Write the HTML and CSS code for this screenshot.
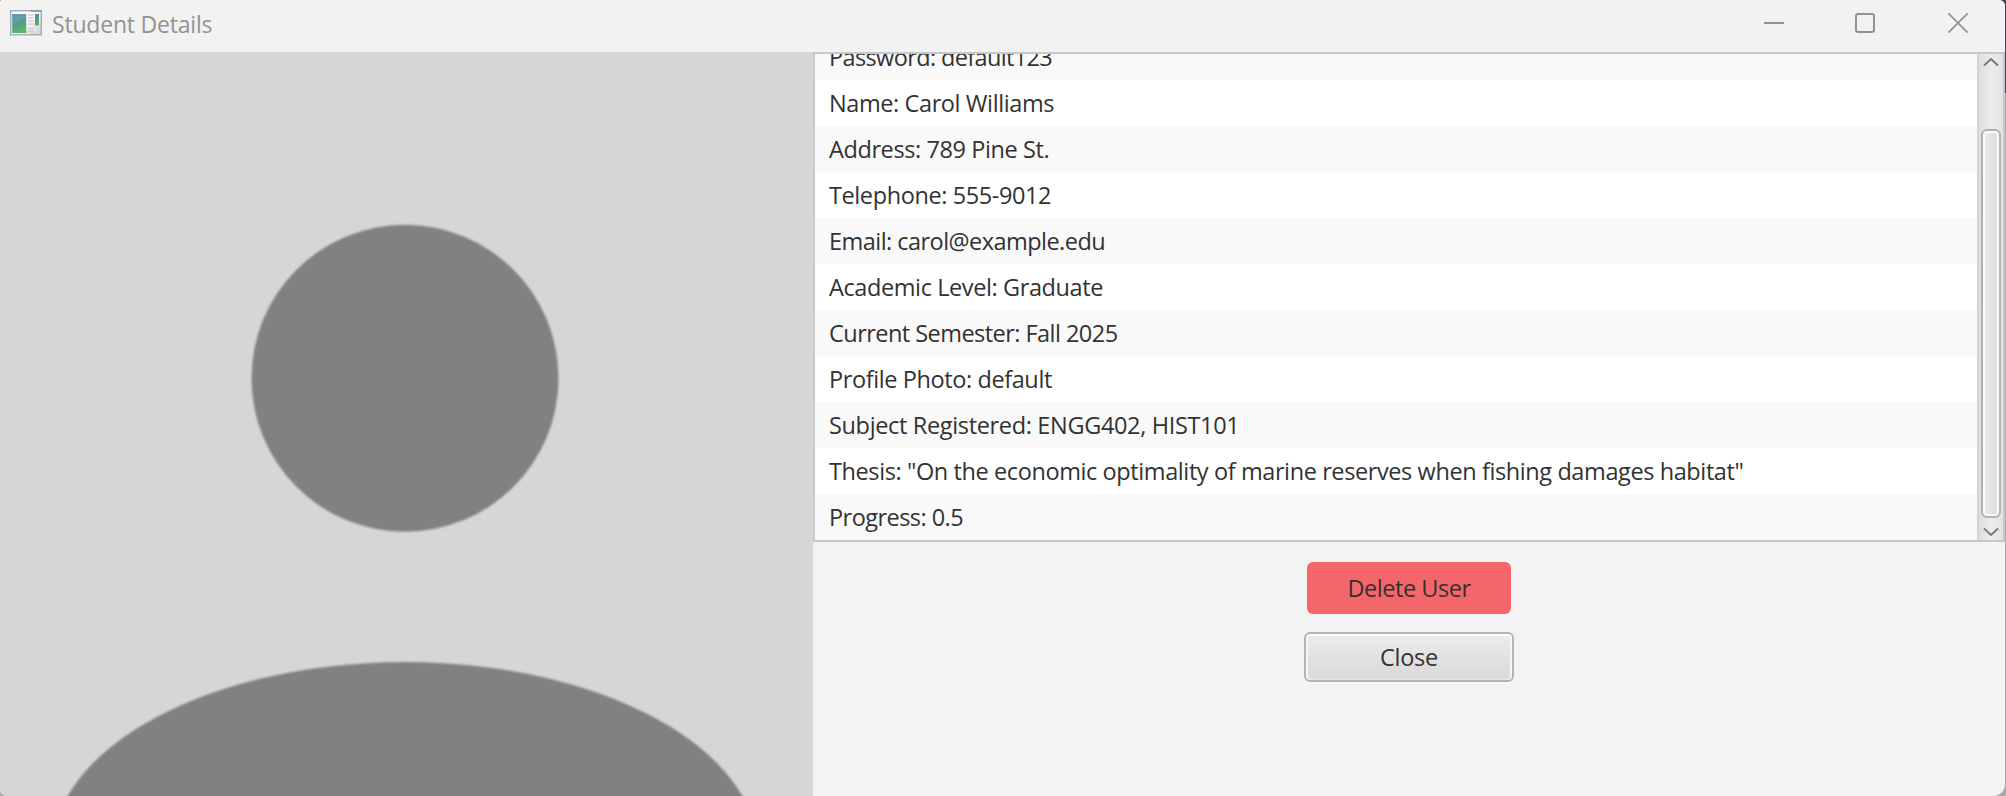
FILE: index.html
```
<!DOCTYPE html>
<html lang="en">
<head>
<meta charset="utf-8">
<title>Student Details</title>
<link rel="stylesheet" href="styles.css">
</head>
<body>
<div class="window">
  <header class="titlebar">
    <svg class="app-icon" width="32" height="26" viewBox="0 0 32 26">
      <defs>
        <linearGradient id="pane" x1="0" y1="0" x2="0.3" y2="1"><stop offset="0" stop-color="#4a7fae"/><stop offset="1" stop-color="#5bb36c"/></linearGradient>
        <linearGradient id="sheet" x1="0" y1="0" x2="1" y2="1"><stop offset="0.5" stop-color="#fbfbfb"/><stop offset="1" stop-color="#cfcfcf"/></linearGradient>
      </defs>
      <rect x="0.7" y="0.7" width="30.6" height="24.1" fill="url(#sheet)" stroke="#a3abb2" stroke-width="1.4"/>
      <path d="M21 1h10" stroke="#8b949d" stroke-width="1.6"/>
      <rect x="2.2" y="4" width="14" height="19" fill="url(#pane)"/>
      <path d="M2.2 15q8-6 14-7V4h-14z" fill="#fff" opacity=".12"/>
      <path d="M18 5h5.500M18 8h5.500M18 11h5.500M18 14h5.500M18 18.500h5.500M18 21.500h5.500" stroke="#cfcfcf" stroke-width="1.3"/>
      <rect x="25" y="4" width="4" height="11.500" fill="url(#pane)"/>
    </svg>
    <h1 class="title">Student Details</h1>
    <nav class="controls">
      <svg width="20" height="20" viewBox="0 0 20 20"><path d="M0 10h20" stroke="#929292" stroke-width="2"/></svg>
      <svg class="maximize" width="20" height="20" viewBox="0 0 20 20"><rect x="1" y="1" width="18" height="18" rx="2" fill="none" stroke="#929292" stroke-width="2"/></svg>
      <svg width="20" height="20" viewBox="0 0 20 20"><path d="M.3.3l19.400 19.400M19.700.3L.3 19.700" stroke="#929292" stroke-width="1.700"/></svg>
    </nav>
  </header>
  <main class="content">
    <svg class="photo" width="813" height="744" viewBox="0 0 813 744">
      <defs><filter id="soft"><feGaussianBlur stdDeviation="1.1"/></filter></defs>
      <rect width="813" height="744" fill="#d6d6d6"/>
      <g fill="#818181" filter="url(#soft)">
        <circle cx="405" cy="326.300" r="153.500"/>
        <ellipse cx="405" cy="800" rx="353" ry="190"/>
      </g>
    </svg>
    <section class="side">
      <div class="list">
        <ul class="rows">
          <li class="row tightest">Password: default123</li>
          <li class="row">Name: Carol Williams</li>
          <li class="row">Address: 789 Pine St.</li>
          <li class="row">Telephone: 555-9012</li>
          <li class="row tight">Email: carol@example.edu</li>
          <li class="row">Academic Level: Graduate</li>
          <li class="row tight">Current Semester: Fall 2025</li>
          <li class="row">Profile Photo: default</li>
          <li class="row loose">Subject Registered: ENGG402, HIST101</li>
          <li class="row">Thesis: "On the economic optimality of marine reserves when fishing damages habitat"</li>
          <li class="row tight">Progress: 0.5</li>
        </ul>
        <div class="scrollbar">
          <svg class="arrow" width="16" height="8" viewBox="0 0 16 8"><path d="M1 7.500L8 1l7 6.500" fill="none" stroke="#7c7c7c" stroke-width="2"/></svg>
          <div class="thumb"></div>
          <svg class="arrow" width="16" height="8" viewBox="0 0 16 8"><path d="M1 .5L8 7l7-6.500" fill="none" stroke="#7c7c7c" stroke-width="2"/></svg>
        </div>
      </div>
      <div class="actions">
        <button class="button danger">Delete User</button>
        <button class="button close">Close</button>
      </div>
    </section>
  </main>
</div>
</body>
</html>
```
FILE: styles.css
```
* { box-sizing: border-box; }
html { background: linear-gradient(#45464c 0 93px, #a9a9a9 93px); }
body {
  margin: 0;
  font-family: "Open Sans", "Noto Sans", sans-serif;
  font-size: 23.5px;
  color: #323232;
  overflow: hidden;
}
.window {
  width: 2005px;
  height: 796px;
  display: flex;
  flex-direction: column;
  background: #f3f3f3;
  border-radius: 2px 6px 12px 7px;
  overflow: hidden;
}
.titlebar {
  flex: none;
  height: 52px;
  display: flex;
  align-items: flex-start;
  padding: 10px 37px 0 10px;
  background: #f2f2f2;
}
.app-icon { flex: none; }
.title {
  margin: -2px 0 0 10px;
  font-size: 23px;
  line-height: 32px;
  font-weight: 400;
  letter-spacing: -0.2px;
  color: #929292;
}
.controls {
  margin: 3px 0 0 auto;
  display: flex;
}
.maximize { margin: 0 73px 0 71px; }
.content { flex: 1; display: flex; }
.photo { flex: none; display: block; }
.side { flex: 1; display: flex; flex-direction: column; }
.list {
  height: 490px;
  display: flex;
  border: 2px solid #c8c8c8;
}
.rows {
  flex: 1;
  margin: 0;
  padding: 0;
  list-style: none;
  display: flex;
  flex-direction: column;
  justify-content: flex-end;
  overflow: hidden;
  background: #fff;
}
.row {
  flex: none;
  height: 46px;
  padding: 0 14px;
  line-height: 46px;
  white-space: pre;
  letter-spacing: -0.4px;
}
.row:nth-child(odd) { background: #f9f9f9; }
.row.loose { letter-spacing: -0.34px; }
.row.tight { letter-spacing: -0.54px; }
.row.tightest { letter-spacing: -0.63px; }
.scrollbar {
  width: 26px;
  display: flex;
  flex-direction: column;
  align-items: center;
  padding: 4px 0 4px;
  border-left: 2px solid #d4d4d4;
  background: linear-gradient(90deg, #dedede, #ececec 50%, #e2e2e2);
}
.arrow { flex: none; }
.thumb {
  width: 20px;
  height: 389px;
  margin: auto 0 10px;
  border: 2px solid #b2b2b2;
  border-radius: 6px;
  background: linear-gradient(90deg, #ededed, #dadada);
  box-shadow: inset 0 0 0 2px #fafafa;
}
.actions {
  display: flex;
  flex-direction: column;
  align-items: center;
  gap: 18px;
  padding-top: 20px;
}
.button {
  font: inherit;
  color: #323232;
  padding: 0;
  border: 0;
  letter-spacing: -0.25px;
}
.danger {
  width: 204px;
  height: 52px;
  padding-bottom: 1px;
  border-radius: 6px;
  background: #f5666a;
  letter-spacing: -0.45px;
}
.close {
  width: 210px;
  height: 50px;
  border: 2px solid #b4b4b4;
  border-radius: 6px;
  background: linear-gradient(#ececec, #d9d9d9);
  box-shadow: inset 0 2px #fff, inset 2px 0 #f6f6f6, inset -2px 0 #f6f6f6, inset 0 -2px #e4e4e4, 0 2px #f8f8f8;
}
```
